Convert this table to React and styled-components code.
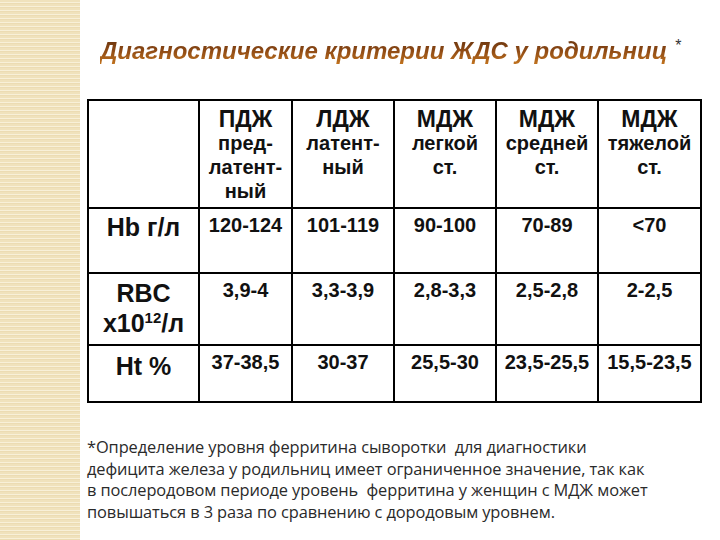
import React from "react";
import styled, { createGlobalStyle } from "styled-components";

const Global = createGlobalStyle`
  html, body { margin: 0; padding: 0; background: #fff; }
  body { width: 720px; height: 540px; overflow: hidden; }
`;

const Page = styled.div`
  display: flex;
  width: 720px;
  height: 540px;
  background: #fff;
`;

const Stripe = styled.div`
  width: 80px;
  flex: none;
  background: repeating-linear-gradient(
    180deg,
    #f0e2bc 0px,
    #f0e2bc 2px,
    #f8f0d8 2px,
    #f8f0d8 3px,
    #ecdcb3 3px,
    #ecdcb3 4px
  );
`;

const Main = styled.div`
  flex: 1;
  display: flex;
  flex-direction: column;
  padding: 36px 0 0 7px;
`;

const Title = styled.h1`
  margin: 0 0 0 13px;
  font-family: "Liberation Sans", Arial, sans-serif;
  font-weight: bold;
  font-style: italic;
  font-size: 24px;
  line-height: 30px;
  display: flex;
  align-items: flex-start;
`;

const TitleText = styled.span`
  background: linear-gradient(180deg, #5e2f0c 0%, #8a4714 45%, #c8781f 100%);
  -webkit-background-clip: text;
  background-clip: text;
  color: transparent;
`;

const Star = styled.span`
  font-style: normal;
  font-weight: normal;
  font-size: 16px;
  line-height: 16px;
  color: #333;
  margin-left: 8px;
  margin-top: 2px;
`;

const Table = styled.table`
  margin-top: 33px;
  border-collapse: collapse;
  width: 613px;
  table-layout: fixed;
  font-family: "Liberation Sans", Arial, sans-serif;
  font-weight: bold;
  color: #111;
`;

const Row = styled.tr`
  height: ${(p) => p.$h}px;
`;

const Cell = styled.td`
  border: 2px solid #000;
  text-align: center;
  vertical-align: top;
  padding: ${(p) => p.$pad || "6px"} 0 0 0;
`;

const Head = styled.div`
  font-size: 23px;
  line-height: 26px;
`;

const Sub = styled.div`
  font-size: 20px;
  line-height: 24px;
  margin-top: -1px;
`;

const Label = styled.div`
  font-size: 25px;
  line-height: 30px;
  sup {
    font-size: 15px;
    line-height: 0;
    vertical-align: 9px;
  }
`;

const Value = styled.div`
  font-size: 20px;
  line-height: 24px;
`;

const Note = styled.p`
  margin: 33px 0 0 0;
  font-family: "Open Sans", sans-serif;
  font-size: 16.4px;
  line-height: 21.7px;
  color: #2a2a2a;
  letter-spacing: -0.1px;
`;

const cols = [111, 93, 102, 102, 102, 103];

const header = [
  ["ПДЖ", "пред-\nлатент-\nный"],
  ["ЛДЖ", "латент-\nный"],
  ["МДЖ", "легкой\nст."],
  ["МДЖ", "средней\nст."],
  ["МДЖ", "тяжелой\nст."],
];

const rows = [
  { label: "Hb г/л", h: 65, pad: "3px", values: ["120-124", "101-119", "90-100", "70-89", "<70"] },
  {
    label: (
      <>
        RBC
        <br />
        x10<sup>12</sup>/л
      </>
    ),
    h: 72,
    pad: "4px",
    values: ["3,9-4", "3,3-3,9", "2,8-3,3", "2,5-2,8", "2-2,5"],
  },
  { label: "Ht %", h: 57, pad: "5px", values: ["37-38,5", "30-37", "25,5-30", "23,5-25,5", "15,5-23,5"] },
];

export default function App() {
  return (
    <>
      <Global />
      <Page>
        <Stripe />
        <Main>
          <Title>
            <TitleText>Диагностические критерии ЖДС у родильниц</TitleText>
            <Star>*</Star>
          </Title>
          <Table>
            <colgroup>
              {cols.map((w, i) => (
                <col key={i} style={{ width: w }} />
              ))}
            </colgroup>
            <tbody>
              <Row $h={108}>
                <Cell />
                {header.map(([h, s], i) => (
                  <Cell key={i} $pad="5px">
                    <Head>{h}</Head>
                    <Sub>
                      {s.split("\n").map((l, j) => (
                        <div key={j}>{l}</div>
                      ))}
                    </Sub>
                  </Cell>
                ))}
              </Row>
              {rows.map((r, i) => (
                <Row key={i} $h={r.h}>
                  <Cell $pad={r.pad}>
                    <Label>{r.label}</Label>
                  </Cell>
                  {r.values.map((v, j) => (
                    <Cell key={j} $pad="4px">
                      <Value>{v}</Value>
                    </Cell>
                  ))}
                </Row>
              ))}
            </tbody>
          </Table>
          <Note>
            *Определение уровня ферритина сыворотки&nbsp; для диагностики
            <br />
            дефицита железа у родильниц имеет ограниченное значение, так как
            <br />
            в послеродовом периоде уровень&nbsp; ферритина у женщин с МДЖ может
            <br />
            повышаться в 3 раза по сравнению с дородовым уровнем.
          </Note>
        </Main>
      </Page>
    </>
  );
}
